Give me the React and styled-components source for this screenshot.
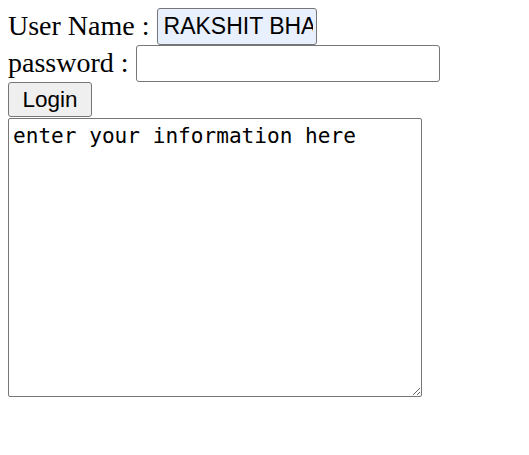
import React from "react";
import styled, { createGlobalStyle } from "styled-components";

const Global = createGlobalStyle`
  html, body { background: #fff; }
  body {
    margin: 8px;
    font-family: "Liberation Serif", "Times New Roman", serif;
    font-size: 28px;
    color: #000;
  }
`;

const Form = styled.form`
  display: flex;
  flex-direction: column;
  align-items: flex-start;
  gap: 1px;
`;

const Row = styled.div`
  display: flex;
  align-items: center;
  height: 36px;
  line-height: 1;
`;

const Label = styled.label`
  white-space: pre;
`;

const Field = styled.input`
  box-sizing: border-box;
  width: ${(p) => p.$w}px;
  height: 37px;
  margin-left: ${(p) => p.$ml}px;
  padding: 0 3px 0 6px;
  font-family: "Liberation Sans", Arial, sans-serif;
  font-size: 23px;
  color: #000;
  background: ${(p) => (p.$filled ? "#e8f0fe" : "#fff")};
  border: 1px solid #767676;
  border-radius: 3px;
  outline: none;
`;

const Button = styled.button`
  box-sizing: border-box;
  width: 84px;
  height: 35px;
  padding: 0;
  font-family: "Liberation Sans", Arial, sans-serif;
  font-size: 22.5px;
  color: #000;
  background: #efefef;
  border: 1px solid #767676;
  border-radius: 3px;
`;

const Area = styled.textarea`
  box-sizing: border-box;
  width: 414px;
  height: 279px;
  margin: 0;
  padding: 4px 4px;
  font-family: "DejaVu Sans Mono", monospace;
  font-size: 21.1px;
  line-height: 1.2;
  color: #000;
  background: #fff;
  border: 1px solid #767676;
  border-radius: 2px;
  outline: none;
`;

export default function App() {
  return (
    <>
      <Global />
      <Form onSubmit={(e) => e.preventDefault()}>
        <Row>
          <Label>User Name :</Label>
          <Field $w={160} $ml={7} $filled defaultValue="RAKSHIT BHARDWAJ" />
        </Row>
        <Row>
          <Label>password :</Label>
          <Field $w={304} $ml={7} type="password" />
        </Row>
        <Button type="button">Login</Button>
        <Area defaultValue="enter your information here" />
      </Form>
    </>
  );
}
